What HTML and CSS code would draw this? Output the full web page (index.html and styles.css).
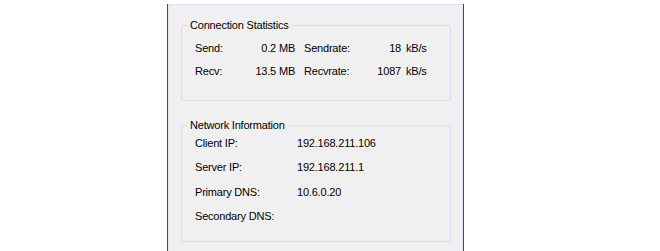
FILE: index.html
```html
<!DOCTYPE html>
<html lang="en">
<head>
    <title>Connection Status</title>
    <link rel="stylesheet" href="styles.css">
</head>
<body>
    <div class="window">
        <div class="client">
            <!-- Traffic counters -->
            <fieldset class="group">
                <legend>Connection Statistics</legend>
                <div class="stats">
                    <span>Send:</span>
                    <span class="num">0.2</span>
                    <span class="unit">MB</span>
                    <span>Sendrate:</span>
                    <span class="num">18</span>
                    <span class="unit wide">kB/s</span>

                    <span>Recv:</span>
                    <span class="num">13.5</span>
                    <span class="unit">MB</span>
                    <span>Recvrate:</span>
                    <span class="num">1087</span>
                    <span class="unit wide">kB/s</span>
                </div>
            </fieldset>

            <!-- Addresses -->
            <fieldset class="group">
                <legend>Network Information</legend>
                <div class="info">
                    <span>Client IP:</span>
                    <span>192.168.211.106</span>
                    <span>Server IP:</span>
                    <span>192.168.211.1</span>
                    <span>Primary DNS:</span>
                    <span>10.6.0.20</span>
                    <span>Secondary DNS:</span>
                    <span></span>
                </div>
            </fieldset>
        </div>
    </div>
</body>
</html>
```

FILE: styles.css
```css
body {
    margin: 0;
    background: #fff;
    font-family: "Liberation Sans", Arial, sans-serif;
    font-size: 11px;
    letter-spacing: -0.2px;
    color: #000;
}

.window {
    width: 295px;
    height: 247px;
    margin: 4px 0 0 167px;
    border-left: 1px solid #4a4a4a;
    border-right: 1px solid #4a4a4a;
    background: #f0f0f0;
}

.client {
    height: 100%;
    border: 1px solid #dae6f3;
    border-bottom: none;
    box-sizing: border-box;
    padding: 14px 11px 0 12px;
}

.group {
    margin: 0;
    padding: 0 0 0 13px;
    border: 1px solid #d5dfe5;
    border-radius: 3px;
    min-width: 0;
}

.group + .group {
    margin-top: 18px;
}

.group legend {
    margin-left: -8px;
    padding: 0 3px;
    line-height: 12px;
}

.stats {
    display: grid;
    grid-template-columns: 45px 36px 28px 66px 31px auto;
    grid-auto-rows: 23px;
    align-items: center;
    padding: 5px 0 18px;
}

.num {
    text-align: right;
}

.unit {
    padding-left: 3px;
}

.unit.wide {
    padding-left: 5px;
}

.info {
    display: grid;
    grid-template-columns: 102px auto;
    grid-auto-rows: 24.3px;
    align-items: center;
    padding: 0 0 13px;
}
```
